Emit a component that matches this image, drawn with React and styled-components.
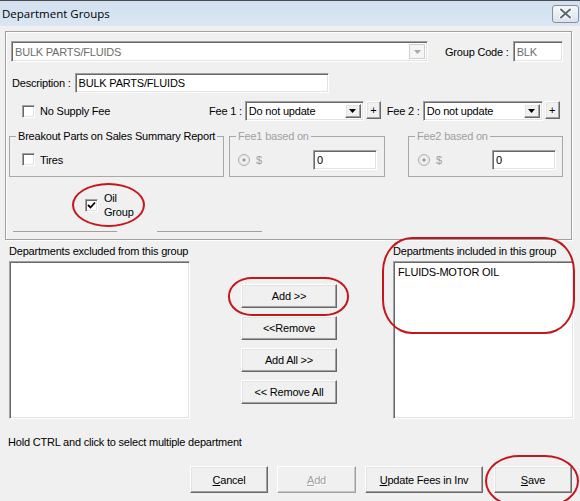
import React from 'react';
import styled, { createGlobalStyle, css } from 'styled-components';

const Global = createGlobalStyle`
  html, body { margin: 0; padding: 0; background: #f0f0f0; }
  body {
    font-family: "Liberation Sans", Arial, sans-serif;
    font-size: 11px;
    letter-spacing: -0.2px;
    color: #000;
  }
  #root { width: 580px; height: 501px; }
`;

const sunken = css`
  box-sizing: border-box;
  border: 1px solid;
  border-color: #a0a0a0 #ffffff #ffffff #a0a0a0;
  box-shadow: inset 1px 1px #696969, inset -1px -1px #e3e3e3;
  background: #fff;
`;

const raised = css`
  box-sizing: border-box;
  border: 1px solid;
  border-color: #ffffff #696969 #696969 #ffffff;
  box-shadow: inset -1px -1px #a0a0a0, inset 1px 1px #e3e3e3;
  background: #f0f0f0;
`;

const Window = styled.div`
  position: relative;
  width: 580px;
  height: 501px;
  overflow: hidden;
  background: #f0f0f0;
  display: flex;
  flex-direction: column;
`;

const TitleBar = styled.div`
  height: 26px;
  flex: none;
  box-sizing: border-box;
  border-top: 1px solid #4d4d4d;
  background: linear-gradient(#d2e0ef, #dae6f3);
  display: flex;
  align-items: center;
  justify-content: space-between;
  padding: 0 1px 0 2px;
`;

const Title = styled.span`
  font-family: "Open Sans", "Noto Sans", sans-serif;
  font-size: 11.5px;
  letter-spacing: 0;
  color: #000;
`;

const CloseBtn = styled.div`
  width: 27px;
  height: 18px;
  box-sizing: border-box;
  border: 1px solid #8390a3;
  border-radius: 3px;
  background: linear-gradient(#f5f7fa, #dde3ea);
  display: flex;
  align-items: center;
  justify-content: center;
`;

const Panel = styled.div`
  margin: 5px 8px 0 5px;
  height: 209px;
  flex: none;
  box-sizing: border-box;
  border: 1px solid #a0a0a0;
  box-shadow: inset 1px 1px #fff, 1px 1px #fff;
  padding-top: 9px;
  display: flex;
  flex-direction: column;
`;

const Row = styled.div`
  display: flex;
  align-items: ${p => p.$align || 'center'};
  margin-top: ${p => p.$mt || 0}px;
  padding-left: ${p => p.$pl || 0}px;
  gap: ${p => p.$gap || 0}px;
`;

const Label = styled.span`
  white-space: nowrap;
  margin-left: ${p => p.$ml || 0}px;
  color: ${p => (p.$disabled ? '#a0a0a0' : '#000')};
`;

const TextBox = styled.div`
  ${sunken};
  width: ${p => p.$w}px;
  height: ${p => p.$h}px;
  margin-left: ${p => p.$ml || 0}px;
  padding: 0 3px;
  display: flex;
  align-items: center;
  color: ${p => (p.$disabled ? '#6d6d6d' : '#000')};
  white-space: nowrap;
`;

const Select = styled.div`
  ${sunken};
  width: ${p => p.$w}px;
  height: ${p => p.$h}px;
  margin-left: ${p => p.$ml || 0}px;
  padding: 2px 2px 2px 3px;
  display: flex;
  align-items: center;
  justify-content: space-between;
  color: ${p => (p.$disabled ? '#6d6d6d' : '#000')};
  white-space: nowrap;
`;

const DropBtn = styled.div`
  box-sizing: border-box;
  width: 16px;
  height: 100%;
  display: flex;
  align-items: center;
  justify-content: center;
  ${p =>
    p.$disabled
      ? css`
          border: 1px solid #d0d0d0;
          background: #f4f4f4;
        `
      : raised};
`;

const PlusBtn = styled.div`
  ${raised};
  width: 15px;
  height: 18px;
  margin-left: 2px;
  align-self: flex-start;
  display: flex;
  align-items: center;
  justify-content: center;
  font-size: 11px;
  padding-bottom: 1px;
`;

const LeftCell = styled.div`
  width: 203px;
  box-sizing: border-box;
  padding-left: 16px;
  display: flex;
  align-items: center;
  gap: 5px;
`;

const CheckBox = styled.div`
  ${sunken};
  width: 13px;
  height: 13px;
  flex: none;
  display: flex;
  align-items: center;
  justify-content: center;
`;

const Group = styled.fieldset`
  margin: 0 0 0 ${p => p.$ml || 0}px;
  padding: 0;
  width: ${p => p.$w}px;
  height: 47px;
  box-sizing: border-box;
  border: 1px solid #a8a8a8;
  display: flex;
  flex-direction: column;
  min-width: 0;
`;

const Legend = styled.legend`
  margin-left: 6px;
  padding: 0 2px;
  line-height: 13px;
  color: ${p => (p.$disabled ? '#a0a0a0' : '#000')};
`;

const GroupBody = styled.div`
  flex: 1;
  display: flex;
  align-items: center;
  padding-left: ${p => p.$pl || 12}px;
  padding-right: ${p => p.$pr || 0}px;
  gap: ${p => p.$gap || 5}px;
`;

const DollarLabel = styled.span`
  color: #a0a0a0;
  margin-left: 3px;
`;

const FeeInput = styled(TextBox)`
  margin-left: auto;
`;

const TwoLine = styled.span`
  line-height: 14px;
`;

const Rule = styled.div`
  width: ${p => p.$w}px;
  margin-left: ${p => p.$ml}px;
  border-top: 1px solid #a0a0a0;
`;

const ListsArea = styled.div`
  margin: 5px 0 0 9px;
  display: grid;
  grid-template-columns: 181px 51px 96px 56px 181px;
`;

const ListCol = styled.div`
  grid-column: ${p => p.$col};
  display: flex;
  flex-direction: column;
`;

const ListLabel = styled.div`
  line-height: 13px;
  white-space: nowrap;
`;

const ListBox = styled.div`
  ${sunken};
  margin-top: 3px;
  height: 158px;
  padding: 4px 0 0 4px;
  line-height: 13px;
`;

const ButtonCol = styled.div`
  grid-column: 3;
  padding-top: 39px;
  display: flex;
  flex-direction: column;
  gap: 8px;
`;

const Button = styled.div`
  ${raised};
  width: ${p => p.$w || 96}px;
  height: ${p => p.$h || 24}px;
  margin-left: ${p => p.$ml || 0}px;
  display: flex;
  align-items: center;
  justify-content: center;
  white-space: nowrap;
  color: ${p => (p.$disabled ? '#a0a0a0' : '#000')};
  text-shadow: ${p => (p.$disabled ? '1px 1px #fff' : 'none')};
  ${p =>
    p.$disabled &&
    css`
      border-color: #fff #a0a0a0 #a0a0a0 #fff;
      box-shadow: inset -1px -1px #c8c8c8;
    `}
`;

const Hint = styled.div`
  margin: 17px 0 0 8px;
  line-height: 13px;
`;

const Footer = styled.div`
  margin-top: 17px;
  padding-left: 190px;
  display: flex;
`;

const Ellipse = styled.div`
  position: absolute;
  left: ${p => p.$x}px;
  top: ${p => p.$y}px;
  width: ${p => p.$w}px;
  height: ${p => p.$h}px;
  box-sizing: border-box;
  border: 2px solid #c4161c;
  border-radius: ${p => p.$r || '50%'};
  pointer-events: none;
`;

const Arrow = ({ color = '#000' }) => (
  <svg width="7" height="4" viewBox="0 0 7 4">
    <path d="M0 0 H7 L3.5 4 Z" fill={color} />
  </svg>
);

const Check = () => (
  <svg width="9" height="9" viewBox="0 0 9 9">
    <path d="M1 4 L3.5 6.5 L8 1.5" fill="none" stroke="#000" strokeWidth="1.8" />
  </svg>
);

const Radio = () => (
  <svg width="12" height="12" viewBox="0 0 12 12">
    <circle cx="6" cy="6" r="5.5" fill="#f4f4f4" stroke="#b0b0b0" />
    <circle cx="6" cy="6" r="4.5" fill="none" stroke="#d8d8d8" />
    <circle cx="6" cy="6" r="1.8" fill="#a0a0a0" />
  </svg>
);

const CloseIcon = () => (
  <svg width="13" height="11" viewBox="0 0 13 11">
    <path d="M2 1.5 L11 9.5 M11 1.5 L2 9.5" stroke="#fff" strokeWidth="4" strokeLinecap="round" />
    <path d="M2 1.5 L11 9.5 M11 1.5 L2 9.5" stroke="#5e6877" strokeWidth="2" strokeLinecap="round" />
  </svg>
);

export default function App() {
  return (
    <>
      <Global />
      <Window>
        <TitleBar>
          <Title>Department Groups</Title>
          <CloseBtn>
            <CloseIcon />
          </CloseBtn>
        </TitleBar>

        <Panel>
          <Row $pl={5}>
            <Select $w={417} $h={21} $disabled>
              <span>BULK PARTS/FLUIDS</span>
              <DropBtn $disabled>
                <Arrow color="#a8a8a8" />
              </DropBtn>
            </Select>
            <Label $ml={17}>Group Code :</Label>
            <TextBox $w={50} $h={21} $ml={4} $disabled>BLK</TextBox>
          </Row>

          <Row $mt={11} $pl={6} $gap={4}>
            <Label>Description :</Label>
            <TextBox $w={254} $h={20}>BULK PARTS/FLUIDS</TextBox>
          </Row>

          <Row $mt={8}>
            <LeftCell>
              <CheckBox />
              <Label>No Supply Fee</Label>
            </LeftCell>
            <Label>Fee 1 :</Label>
            <Select $w={119} $h={20} $ml={3}>
              <span>Do not update</span>
              <DropBtn>
                <Arrow />
              </DropBtn>
            </Select>
            <PlusBtn>+</PlusBtn>
            <Label $ml={6}>Fee 2 :</Label>
            <Select $w={120} $h={20} $ml={3}>
              <span>Do not update</span>
              <DropBtn>
                <Arrow />
              </DropBtn>
            </Select>
            <PlusBtn>+</PlusBtn>
          </Row>

          <Row $mt={9} $pl={3} $align="flex-start">
            <Group $w={215}>
              <Legend>Breakout Parts on Sales Summary Report</Legend>
              <GroupBody $pl={12} $gap={5}>
                <CheckBox />
                <Label>Tires</Label>
              </GroupBody>
            </Group>
            <Group $w={156} $ml={5}>
              <Legend $disabled>Fee1 based on</Legend>
              <GroupBody $pl={8} $pr={7} $gap={3}>
                <Radio />
                <DollarLabel>$</DollarLabel>
                <FeeInput $w={64} $h={20}>0</FeeInput>
              </GroupBody>
            </Group>
            <Group $w={155} $ml={23}>
              <Legend $disabled>Fee2 based on</Legend>
              <GroupBody $pl={9} $pr={6} $gap={3}>
                <Radio />
                <DollarLabel>$</DollarLabel>
                <FeeInput $w={64} $h={20}>0</FeeInput>
              </GroupBody>
            </Group>
          </Row>

          <Row $mt={14} $pl={79} $gap={6}>
            <CheckBox>
              <Check />
            </CheckBox>
            <TwoLine>
              Oil
              <br />
              Group
            </TwoLine>
          </Row>

          <Row $mt={12}>
            <Rule $w={104} $ml={7} />
            <Rule $w={105} $ml={40} />
          </Row>
        </Panel>

        <ListsArea>
          <ListCol $col={1}>
            <ListLabel>Departments excluded from this group</ListLabel>
            <ListBox />
          </ListCol>
          <ButtonCol>
            <Button>Add &gt;&gt;</Button>
            <Button>&lt;&lt;Remove</Button>
            <Button>Add All &gt;&gt;</Button>
            <Button>&lt;&lt; Remove All</Button>
          </ButtonCol>
          <ListCol $col={5}>
            <ListLabel>Departments included in this group</ListLabel>
            <ListBox>FLUIDS-MOTOR OIL</ListBox>
          </ListCol>
        </ListsArea>

        <Hint>Hold CTRL and click to select multiple department</Hint>

        <Footer>
          <Button $w={78} $h={27}>
            <u>C</u>ancel
          </Button>
          <Button $w={79} $h={27} $ml={9} $disabled>
            <u>A</u>dd
          </Button>
          <Button $w={118} $h={27} $ml={9}>
            <u>U</u>pdate Fees in Inv
          </Button>
          <Button $w={78} $h={27} $ml={11}>
            <u>S</u>ave
          </Button>
        </Footer>

        <Ellipse $x={72} $y={183} $w={73} $h={44} />
        <Ellipse $x={228} $y={277} $w={121} $h={39} $r="24px / 19px" />
        <Ellipse $x={382} $y={237} $w={193} $h={97} $r="30px / 34px" />
        <Ellipse $x={485} $y={455} $w={94} $h={52} $r="34px / 26px" />
      </Window>
    </>
  );
}
